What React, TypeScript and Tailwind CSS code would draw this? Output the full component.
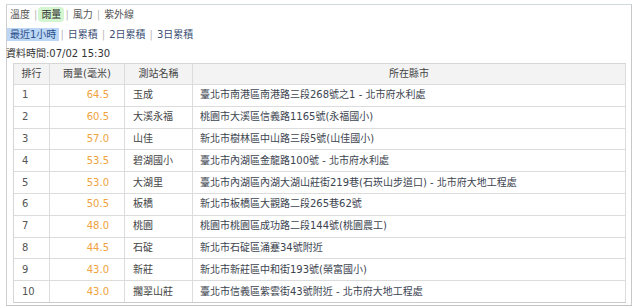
import React from 'react';

const rows = [
  { rank: 1, rain: '64.5', name: '玉成', addr: '臺北市南港區南港路三段268號之1 - 北市府水利處' },
  { rank: 2, rain: '60.5', name: '大溪永福', addr: '桃園市大溪區信義路1165號(永福國小)' },
  { rank: 3, rain: '57.0', name: '山佳', addr: '新北市樹林區中山路三段5號(山佳國小)' },
  { rank: 4, rain: '53.5', name: '碧湖國小', addr: '臺北市內湖區金龍路100號 - 北市府水利處' },
  { rank: 5, rain: '53.0', name: '大湖里', addr: '臺北市內湖區內湖大湖山莊街219巷(石崁山步道口) - 北市府大地工程處' },
  { rank: 6, rain: '50.5', name: '板橋', addr: '新北市板橋區大觀路二段265巷62號' },
  { rank: 7, rain: '48.0', name: '桃園', addr: '桃園市桃園區成功路二段144號(桃園農工)' },
  { rank: 8, rain: '44.5', name: '石碇', addr: '新北市石碇區涌蹇34號附近' },
  { rank: 9, rain: '43.0', name: '新莊', addr: '新北市新莊區中和街193號(榮富國小)' },
  { rank: 10, rain: '43.0', name: '擱翠山莊', addr: '臺北市信義區紫雲街43號附近 - 北市府大地工程處' },
];

const Sep = () => <span className="mx-[1px] text-[#b8b8b8]">|</span>;

const App: React.FC = () => {
  return (
    <div className="w-[639px] h-[308px] bg-white font-['DejaVu_Sans','Noto_Sans_CJK_TC',sans-serif] text-[10px] leading-[12px] text-[#444] overflow-hidden">
      <div className="ml-[6px] mt-[4px] w-[626px] h-[302px] pb-[2px] flex flex-col border border-[#d3dadd] border-l-[#cfcfcf] border-b-[#c4c4c4] border-r-[#c8c8c8]">
        {/* weather type tabs */}
        <div className="flex items-center h-[19px] shrink-0">
          <span className="px-[3px] leading-[15px] text-[#555]">溫度</span>
          <Sep />
          <span className="px-[3px] leading-[15px] bg-[#d3f5cf] rounded-sm text-[#333]">雨量</span>
          <Sep />
          <span className="px-[3px] leading-[15px] text-[#555]">風力</span>
          <Sep />
          <span className="px-[3px] leading-[15px] text-[#555]">紫外線</span>
        </div>
        {/* accumulation tabs */}
        <div className="flex items-center h-[21px] shrink-0">
          <span className="px-[3px] leading-[13px] bg-[#bcd6f6] text-[#2a4f8a]">最近1小時</span>
          <Sep />
          <span className="px-[3px] leading-[13px] text-[#3b4f73]">日累積</span>
          <Sep />
          <span className="px-[3px] leading-[13px] text-[#3b4f73]">2日累積</span>
          <Sep />
          <span className="px-[3px] leading-[13px] text-[#3b4f73]">3日累積</span>
        </div>
        <div className="h-[18px] shrink-0 -ml-[1px] flex items-center text-[#333]">資料時間:07/02 15:30</div>

        <div className="ml-[6px] w-[613px] flex-1 flex flex-col border-t border-l border-b border-[#d6d6d6] border-b-[#cccccc]">
          <div className="grid grid-cols-[36px_75px_68px_1fr] h-[21px] shrink-0 bg-[#f3f3f3] border-b border-[#dcdcdc]">
            <div className="flex items-center justify-center border-r border-[#dcdcdc]">排行</div>
            <div className="flex items-center justify-center border-r border-[#dcdcdc]">雨量(毫米)</div>
            <div className="flex items-center justify-center border-r border-[#dcdcdc]">測站名稱</div>
            <div className="flex items-center justify-center border-r border-[#dcdcdc]">所在縣市</div>
          </div>
          {rows.map((r, i) => (
            <div
              key={r.rank}
              className={`grid grid-cols-[36px_75px_68px_1fr] flex-1 ${i < rows.length - 1 ? 'border-b border-[#dcdcdc]' : ''}`}
            >
              <div className="flex items-center pl-[8px] border-r border-[#dcdcdc] text-[#555]">{r.rank}</div>
              <div className="flex items-center justify-end pr-[15px] border-r border-[#dcdcdc] text-[#f0a23c]">{r.rain}</div>
              <div className="flex items-center pl-[8px] border-r border-[#dcdcdc] text-[#444]">{r.name}</div>
              <div className="flex items-center pl-[7px] border-r border-[#dcdcdc] text-[#3c4450] whitespace-nowrap">{r.addr}</div>
            </div>
          ))}
        </div>
      </div>
    </div>
  );
};

export default App;
